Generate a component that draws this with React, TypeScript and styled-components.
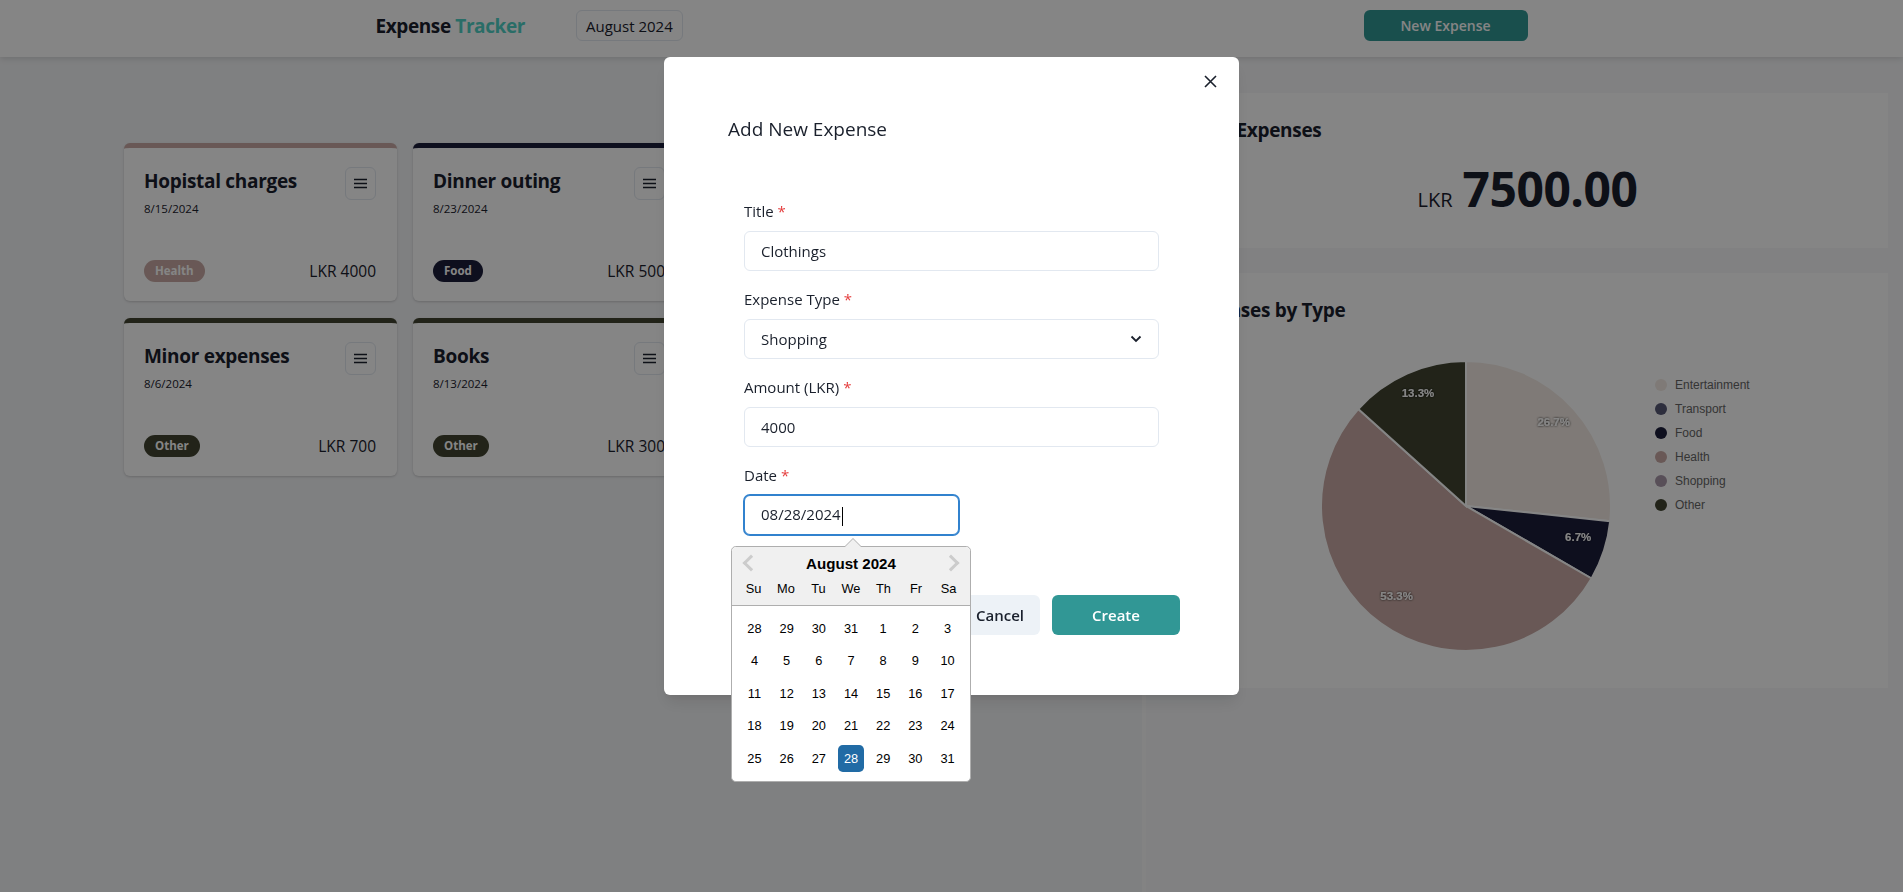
import React from 'react'
import styled, { createGlobalStyle } from 'styled-components'

const GlobalStyle = createGlobalStyle`
  * { box-sizing: border-box; }
  html, body { margin: 0; padding: 0; }
  body {
    font-family: 'Open Sans', 'Noto Sans', sans-serif;
    color: #1a202c;
    background: #f4f5f7;
  }
`

const TYPE_COLORS: Record<string, string> = {
  Entertainment: '#f3eae4',
  Transport: '#565876',
  Food: '#1b1d3b',
  Health: '#c9aaa5',
  Shopping: '#a998aa',
  Other: '#414430',
}

interface IExpense {
  id: number
  title: string
  date: string
  type: string
  amount: number
}

const expenses: IExpense[] = [
  { id: 1, title: 'Hopistal charges', date: '8/15/2024', type: 'Health', amount: 4000 },
  { id: 2, title: 'Dinner outing', date: '8/23/2024', type: 'Food', amount: 500 },
  { id: 3, title: 'Movie night', date: '8/20/2024', type: 'Entertainment', amount: 2000 },
  { id: 4, title: 'Minor expenses', date: '8/6/2024', type: 'Other', amount: 700 },
  { id: 5, title: 'Books', date: '8/13/2024', type: 'Other', amount: 300 },
]

const PAGE = styled.div`
  min-height: 100vh;
  display: flex;
  flex-direction: column;
`

const HEADER = styled.header`
  height: 57px;
  flex-shrink: 0;
  background: #fff;
  box-shadow: 0 2px 6px rgba(0, 0, 0, 0.12);
  display: flex;
  justify-content: center;
  padding-bottom: 6px;
  position: relative;
  z-index: 1;
`

const HEADER_INNER = styled.div`
  width: 1152px;
  display: flex;
  align-items: center;
  justify-content: space-between;
`

const BRAND_GROUP = styled.div`
  display: flex;
  align-items: center;
  gap: 51px;
`

const BRAND = styled.h1`
  margin: 0;
  font-size: 19px;
  font-weight: 700;
  letter-spacing: -0.4px;
  span {
    color: #4fd1c5;
  }
`

const MONTH_BUTTON = styled.button`
  height: 31px;
  padding: 0 9px;
  border: 1px solid #e2e8f0;
  border-radius: 6px;
  background: #fff;
  font-family: inherit;
  font-size: 15px;
  color: #1a202c;
`

const NEW_BUTTON = styled.button`
  width: 164px;
  height: 31px;
  border: none;
  border-radius: 6px;
  background: #319795;
  color: #fff;
  font-family: inherit;
  font-size: 14px;
  font-weight: 600;
`

const BODY = styled.div`
  flex: 1;
  display: flex;
`

const MAIN = styled.main`
  width: 1142px;
  padding: 86px 0 0 124px;
  display: flex;
  flex-wrap: wrap;
  align-content: flex-start;
  gap: 17px 16px;
`

const SIDE = styled.aside`
  flex: 1;
  background: #f7f8fa;
  border-left: 4px solid #fcfcfc;
  padding: 36px 15px 0 15px;
  display: flex;
  flex-direction: column;
  gap: 25px;
`

const CARD = styled.div<{ $accent: string }>`
  width: 273px;
  height: 158px;
  background: #fff;
  border-radius: 6px;
  border-top: 5px solid ${({ $accent }) => $accent};
  box-shadow: 0 1px 3px rgba(0, 0, 0, 0.12), 0 1px 2px rgba(0, 0, 0, 0.06);
  padding: 19px 21px 19px 20px;
  display: flex;
  flex-direction: column;
  justify-content: space-between;
`

const CARD_TOP = styled.div`
  display: flex;
  justify-content: space-between;
  align-items: flex-start;
`

const CARD_TITLE = styled.div`
  font-size: 19px;
  font-weight: 700;
  line-height: 28px;
  letter-spacing: -0.3px;
`

const CARD_DATE = styled.div`
  font-size: 11.5px;
  line-height: 18px;
  margin-top: 5px;
`

const MENU_BUTTON = styled.button`
  width: 31px;
  height: 33px;
  border: 1px solid #e2e8f0;
  border-radius: 6px;
  background: #fff;
  display: flex;
  align-items: center;
  justify-content: center;
  padding: 0;
`

const CARD_BOTTOM = styled.div`
  display: flex;
  justify-content: space-between;
  align-items: center;
`

const BADGE = styled.span<{ $bg: string }>`
  height: 22px;
  line-height: 22px;
  padding: 0 11px;
  border-radius: 999px;
  background: ${({ $bg }) => $bg};
  color: #fff;
  font-size: 11.5px;
  font-weight: 700;
`

const AMOUNT = styled.span`
  font-size: 15.5px;
`

const PANEL = styled.section`
  background: #fff;
  padding: 24px 24px 0;
`

const PANEL_TITLE = styled.h2`
  margin: 0;
  font-size: 19px;
  font-weight: 700;
  line-height: 27px;
  letter-spacing: -0.3px;
`

const TOTAL_ROW = styled.div`
  display: flex;
  align-items: baseline;
  justify-content: center;
  gap: 10px;
  margin: 21px 0 0;
  padding-bottom: 24px;
  padding-left: 6px;
`

const TOTAL_CURRENCY = styled.span`
  font-size: 20px;
  line-height: 48px;
`

const TOTAL_VALUE = styled.span`
  font-size: 48px;
  font-weight: 700;
  line-height: 48px;
  letter-spacing: -0.5px;
`

const CHART_ROW = styled.div`
  display: flex;
  align-items: flex-start;
  gap: 43px;
  padding: 36px 0 36px 135px;
`

const LEGEND = styled.ul`
  list-style: none;
  margin: 13px 0 0;
  padding: 0;
  font-family: 'Liberation Sans', Arial, sans-serif;
  font-size: 12px;
  color: #666;
`

const LEGEND_ITEM = styled.li`
  height: 24px;
  display: flex;
  align-items: center;
  gap: 8px;
`

const LEGEND_DOT = styled.span<{ $color: string }>`
  width: 12px;
  height: 12px;
  border-radius: 50%;
  background: ${({ $color }) => $color};
`

/* modal */

const OVERLAY = styled.div`
  position: fixed;
  inset: 0;
  background: rgba(0, 0, 0, 0.48);
  display: flex;
  justify-content: center;
  align-items: flex-start;
  z-index: 10;
`

const MODAL = styled.div`
  position: relative;
  margin-top: 57px;
  width: 575px;
  background: #fff;
  border-radius: 6px;
  box-shadow: 0 10px 15px -3px rgba(0, 0, 0, 0.1), 0 4px 6px -2px rgba(0, 0, 0, 0.05);
`

const CLOSE_BUTTON = styled.button`
  position: absolute;
  top: 8px;
  right: 13px;
  width: 32px;
  height: 32px;
  border: none;
  background: transparent;
  display: flex;
  align-items: center;
  justify-content: center;
  padding: 0;
`

const MODAL_TITLE = styled.h2`
  margin: 0;
  padding: 57px 64px 0;
  font-size: 19px;
  font-weight: 500;
  line-height: 30px;
`

const FORM = styled.div`
  padding: 55px 80px 0;
  display: flex;
  flex-direction: column;
  gap: 16px;
`

const FIELD = styled.div`
  display: flex;
  flex-direction: column;
`

const LABEL = styled.label`
  font-size: 15px;
  font-weight: 500;
  line-height: 24px;
  margin-bottom: 8px;
`

const REQUIRED = styled.span`
  color: #e53e3e;
  margin-left: 4px;
`

const INPUT_BOX = styled.div<{ $focused?: boolean }>`
  height: 40px;
  border: 1px solid ${({ $focused }) => ($focused ? '#3182ce' : '#e2e8f0')};
  box-shadow: ${({ $focused }) => ($focused ? '0 0 0 1px #3182ce' : 'none')};
  border-radius: 6px;
  padding: 0 16px;
  font-size: 15px;
  display: flex;
  align-items: center;
  justify-content: space-between;
  background: #fff;
`

const CARET = styled.span`
  display: inline-block;
  width: 1px;
  height: 19px;
  background: #000;
  margin-left: 1px;
  vertical-align: middle;
`

const DATE_WRAP = styled.div`
  position: relative;
  width: 215px;
`

const FOOTER = styled.div`
  display: flex;
  justify-content: flex-end;
  gap: 12px;
  padding: 60px 59px 60px;
`

const BUTTON = styled.button<{ $primary?: boolean }>`
  height: 40px;
  min-width: ${({ $primary }) => ($primary ? '128px' : 'auto')};
  padding: 0 16px;
  border: none;
  border-radius: 6px;
  background: ${({ $primary }) => ($primary ? '#319795' : '#edf2f7')};
  color: ${({ $primary }) => ($primary ? '#fff' : '#1a202c')};
  font-family: inherit;
  font-size: 15px;
  font-weight: 600;
`

/* date picker */

const CALENDAR = styled.div`
  position: absolute;
  top: calc(100% + 11px);
  left: -13px;
  width: 240px;
  z-index: 2;
  font-family: 'Liberation Sans', Arial, sans-serif;
  font-size: 12.8px;
  color: #000;
  background: #fff;
  border: 1px solid #aeaeae;
  border-radius: 4.8px;
`

const CAL_TRIANGLE = styled.span`
  position: absolute;
  top: -9px;
  left: 112px;
  width: 0;
  height: 0;
  border-left: 9px solid transparent;
  border-right: 9px solid transparent;
  border-bottom: 9px solid #aeaeae;
  &::after {
    content: '';
    position: absolute;
    top: 1px;
    left: -8px;
    border-left: 8px solid transparent;
    border-right: 8px solid transparent;
    border-bottom: 8px solid #f0f0f0;
  }
`

const CAL_HEADER = styled.div`
  position: relative;
  background: #f0f0f0;
  border-bottom: 1px solid #aeaeae;
  border-radius: 4.8px 4.8px 0 0;
  padding-top: 8px;
  text-align: center;
`

const CAL_MONTH = styled.div`
  font-weight: 700;
  font-size: 15.1px;
  line-height: 17px;
`

const CAL_NAV = styled.span<{ $side: 'left' | 'right' }>`
  position: absolute;
  top: 0;
  ${({ $side }) => $side}: 1px;
  width: 32px;
  height: 32px;
  display: flex;
  align-items: center;
  justify-content: center;
  &::before {
    content: '';
    width: 9px;
    height: 9px;
    border-style: solid;
    border-color: #ccc;
    border-width: 3px 3px 0 0;
    transform: rotate(${({ $side }) => ($side === 'left' ? '225deg' : '45deg')});
    margin-${({ $side }) => ($side === 'left' ? 'left' : 'right')}: 4px;
  }
`

const CAL_ROW = styled.div`
  display: flex;
  justify-content: center;
`

const CAL_CELL = styled.span<{ $selected?: boolean }>`
  width: 27.2px;
  line-height: 27.2px;
  margin: 2.66px;
  text-align: center;
  border-radius: 4.8px;
  background: ${({ $selected }) => ($selected ? '#216ba5' : 'transparent')};
  color: ${({ $selected }) => ($selected ? '#fff' : '#000')};
`

const CAL_MONTH_BODY = styled.div`
  margin: 6.4px;
`

const weeks = [
  [28, 29, 30, 31, 1, 2, 3],
  [4, 5, 6, 7, 8, 9, 10],
  [11, 12, 13, 14, 15, 16, 17],
  [18, 19, 20, 21, 22, 23, 24],
  [25, 26, 27, 28, 29, 30, 31],
]

const HamburgerIcon = () => (
  <svg width="13" height="11" viewBox="0 0 13 11">
    <path d="M0 1.5h13M0 5.5h13M0 9.5h13" stroke="#1a202c" strokeWidth="1.4" />
  </svg>
)

const CloseIcon = () => (
  <svg width="13" height="13" viewBox="0 0 13 13">
    <path d="M1 1l11 11M12 1L1 12" stroke="#1a202c" strokeWidth="1.6" />
  </svg>
)

const ChevronDownIcon = () => (
  <svg width="12" height="8" viewBox="0 0 12 8">
    <path d="M1.5 1.5L6 6l4.5-4.5" stroke="#1a202c" strokeWidth="1.8" fill="none" />
  </svg>
)

const chartData = [
  { label: 'Entertainment', value: 2000 },
  { label: 'Transport', value: 0 },
  { label: 'Food', value: 500 },
  { label: 'Health', value: 4000 },
  { label: 'Shopping', value: 0 },
  { label: 'Other', value: 1000 },
]

const PieChart = () => {
  const size = 292
  const c = size / 2
  const r = 145
  const total = chartData.reduce((s, d) => s + d.value, 0)
  const point = (t: number, rad: number) => [c + rad * Math.sin(2 * Math.PI * t), c - rad * Math.cos(2 * Math.PI * t)]
  let acc = 0
  const slices = chartData
    .filter((d) => d.value > 0)
    .map((d) => {
      const start = acc / total
      acc += d.value
      const end = acc / total
      const [x0, y0] = point(start, r)
      const [x1, y1] = point(end, r)
      const large = end - start > 0.5 ? 1 : 0
      const [lx, ly] = point((start + end) / 2, 118)
      return {
        ...d,
        path: `M${c} ${c} L${x0} ${y0} A${r} ${r} 0 ${large} 1 ${x1} ${y1} Z`,
        lx,
        ly: ly - 4,
        pct: ((d.value / total) * 100).toFixed(1) + '%',
      }
    })
  return (
    <svg width={size} height={size} viewBox={`0 0 ${size} ${size}`}>
      <defs>
        <filter id="labelShadow" x="-20%" y="-50%" width="140%" height="200%">
          <feDropShadow dx="0" dy="0" stdDeviation="1.2" floodColor="#000" floodOpacity="0.9" />
        </filter>
      </defs>
      {slices.map((s) => (
        <path key={s.label} d={s.path} fill={TYPE_COLORS[s.label]} stroke="#fff" strokeWidth="2" />
      ))}
      {slices.map((s) => (
        <text
          key={s.label + '-l'}
          x={s.lx}
          y={s.ly}
          textAnchor="middle"
          dominantBaseline="middle"
          fill="#fff"
          fontFamily="'Liberation Sans', Arial, sans-serif"
          fontSize="11.5"
          fontWeight="700"
          filter="url(#labelShadow)"
        >
          {s.pct}
        </text>
      ))}
    </svg>
  )
}

const ExpenseCard = ({ expense }: { expense: IExpense }) => (
  <CARD $accent={TYPE_COLORS[expense.type]}>
    <CARD_TOP>
      <div>
        <CARD_TITLE>{expense.title}</CARD_TITLE>
        <CARD_DATE>{expense.date}</CARD_DATE>
      </div>
      <MENU_BUTTON>
        <HamburgerIcon />
      </MENU_BUTTON>
    </CARD_TOP>
    <CARD_BOTTOM>
      <BADGE $bg={TYPE_COLORS[expense.type]}>{expense.type}</BADGE>
      <AMOUNT>LKR {expense.amount}</AMOUNT>
    </CARD_BOTTOM>
  </CARD>
)

const DatePickerPopup = () => (
  <CALENDAR>
    <CAL_TRIANGLE />
    <CAL_HEADER>
      <CAL_NAV $side="left" />
      <CAL_NAV $side="right" />
      <CAL_MONTH>August 2024</CAL_MONTH>
      <CAL_ROW>
        {['Su', 'Mo', 'Tu', 'We', 'Th', 'Fr', 'Sa'].map((d) => (
          <CAL_CELL key={d}>{d}</CAL_CELL>
        ))}
      </CAL_ROW>
    </CAL_HEADER>
    <CAL_MONTH_BODY>
      {weeks.map((w, i) => (
        <CAL_ROW key={i}>
          {w.map((d) => (
            <CAL_CELL key={d} $selected={i === 4 && d === 28}>
              {d}
            </CAL_CELL>
          ))}
        </CAL_ROW>
      ))}
    </CAL_MONTH_BODY>
  </CALENDAR>
)

const AddExpenseModal = () => (
  <OVERLAY>
    <MODAL>
      <CLOSE_BUTTON>
        <CloseIcon />
      </CLOSE_BUTTON>
      <MODAL_TITLE>Add New Expense</MODAL_TITLE>
      <FORM>
        <FIELD>
          <LABEL>
            Title<REQUIRED>*</REQUIRED>
          </LABEL>
          <INPUT_BOX>Clothings</INPUT_BOX>
        </FIELD>
        <FIELD>
          <LABEL>
            Expense Type<REQUIRED>*</REQUIRED>
          </LABEL>
          <INPUT_BOX>
            Shopping
            <ChevronDownIcon />
          </INPUT_BOX>
        </FIELD>
        <FIELD>
          <LABEL>
            Amount (LKR)<REQUIRED>*</REQUIRED>
          </LABEL>
          <INPUT_BOX>4000</INPUT_BOX>
        </FIELD>
        <FIELD>
          <LABEL>
            Date<REQUIRED>*</REQUIRED>
          </LABEL>
          <DATE_WRAP>
            <INPUT_BOX $focused>
              <span>
                08/28/2024
                <CARET />
              </span>
            </INPUT_BOX>
            <DatePickerPopup />
          </DATE_WRAP>
        </FIELD>
      </FORM>
      <FOOTER>
        <BUTTON>Cancel</BUTTON>
        <BUTTON $primary>Create</BUTTON>
      </FOOTER>
    </MODAL>
  </OVERLAY>
)

export default function App() {
  const total = expenses.reduce((s, e) => s + e.amount, 0)
  return (
    <>
      <GlobalStyle />
      <PAGE>
        <HEADER>
          <HEADER_INNER>
            <BRAND_GROUP>
              <BRAND>
                Expense <span>Tracker</span>
              </BRAND>
              <MONTH_BUTTON>August 2024</MONTH_BUTTON>
            </BRAND_GROUP>
            <NEW_BUTTON>New Expense</NEW_BUTTON>
          </HEADER_INNER>
        </HEADER>
        <BODY>
          <MAIN>
            {expenses.map((e) => (
              <ExpenseCard key={e.id} expense={e} />
            ))}
          </MAIN>
          <SIDE>
            <PANEL>
              <PANEL_TITLE>Total Expenses</PANEL_TITLE>
              <TOTAL_ROW>
                <TOTAL_CURRENCY>LKR</TOTAL_CURRENCY>
                <TOTAL_VALUE>{total.toFixed(2)}</TOTAL_VALUE>
              </TOTAL_ROW>
            </PANEL>
            <PANEL>
              <PANEL_TITLE>Expenses by Type</PANEL_TITLE>
              <CHART_ROW>
                <PieChart />
                <LEGEND>
                  {chartData.map((d) => (
                    <LEGEND_ITEM key={d.label}>
                      <LEGEND_DOT $color={TYPE_COLORS[d.label]} />
                      {d.label}
                    </LEGEND_ITEM>
                  ))}
                </LEGEND>
              </CHART_ROW>
            </PANEL>
          </SIDE>
        </BODY>
      </PAGE>
      <AddExpenseModal />
    </>
  )
}
